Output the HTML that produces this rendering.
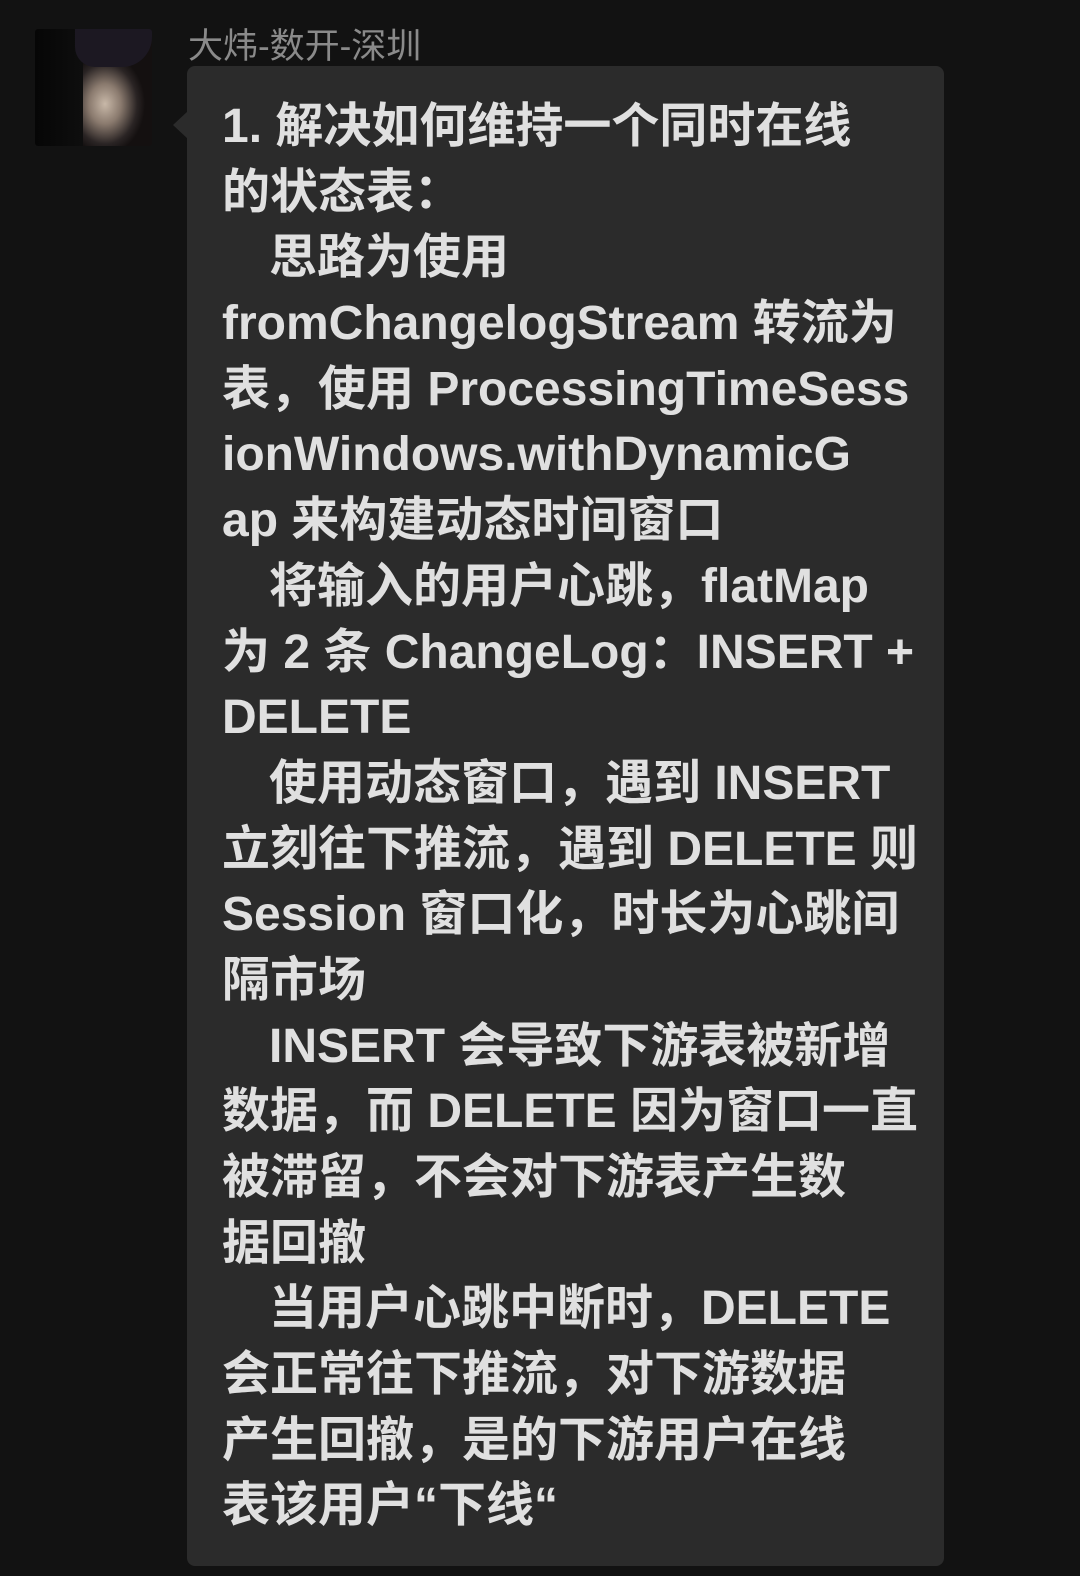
<!DOCTYPE html>
<html><head><meta charset="utf-8"><style>
html,body{margin:0;padding:0;background:#121212;width:1080px;height:1576px;overflow:hidden}
.av{position:absolute;left:35px;top:29px;width:117px;height:117px;border-radius:3px;background:radial-gradient(ellipse 40px 50px at 70px 75px,#c8b8a8 0%,#8a7a6e 40%,#2a2424 80%,#141010 100%);overflow:hidden}
.av:before{content:"";position:absolute;left:0;top:0;width:48px;height:117px;background:linear-gradient(90deg,#060606,#0e0e0e)}
.av:after{content:"";position:absolute;left:40px;top:0;width:77px;height:38px;background:#1c1822;border-radius:0 0 30px 20px}
.name{position:absolute;left:188px;top:18px;font:35px "Liberation Sans","Noto Sans CJK SC",sans-serif;color:#8a8a8a}
.bub{position:absolute;left:187px;top:66px;width:757px;height:1500px;background:#2b2b2b;border-radius:8px}
.tri{position:absolute;left:173px;top:111px;width:0;height:0;border-top:14px solid transparent;border-bottom:14px solid transparent;border-right:15px solid #2b2b2b}
.t{position:absolute;left:222px;top:94px;font:bold 48px/65.7px "Liberation Sans","Noto Sans CJK SC",sans-serif;color:#e0e0e0;white-space:nowrap}
.t div{height:65.7px}
.t .i{padding-left:47px}
</style></head><body>
<div class="av"></div>
<div class="name">大炜-数开-深圳</div>
<div class="tri"></div>
<div class="bub"></div>
<div class="t">
<div>1. 解决如何维持一个同时在线</div>
<div>的状态表：</div>
<div class="i">思路为使用</div>
<div>fromChangelogStream 转流为</div>
<div>表，使用 ProcessingTimeSess</div>
<div>ionWindows.withDynamicG</div>
<div>ap 来构建动态时间窗口</div>
<div class="i">将输入的用户心跳，flatMap</div>
<div>为 2 条 ChangeLog：INSERT +</div>
<div>DELETE</div>
<div class="i">使用动态窗口，遇到 INSERT</div>
<div>立刻往下推流，遇到 DELETE 则</div>
<div>Session 窗口化，时长为心跳间</div>
<div>隔市场</div>
<div class="i">INSERT 会导致下游表被新增</div>
<div>数据，而 DELETE 因为窗口一直</div>
<div>被滞留，不会对下游表产生数</div>
<div>据回撤</div>
<div class="i">当用户心跳中断时，DELETE</div>
<div>会正常往下推流，对下游数据</div>
<div>产生回撤，是的下游用户在线</div>
<div>表该用户“下线“</div>
</div>
</body></html>
